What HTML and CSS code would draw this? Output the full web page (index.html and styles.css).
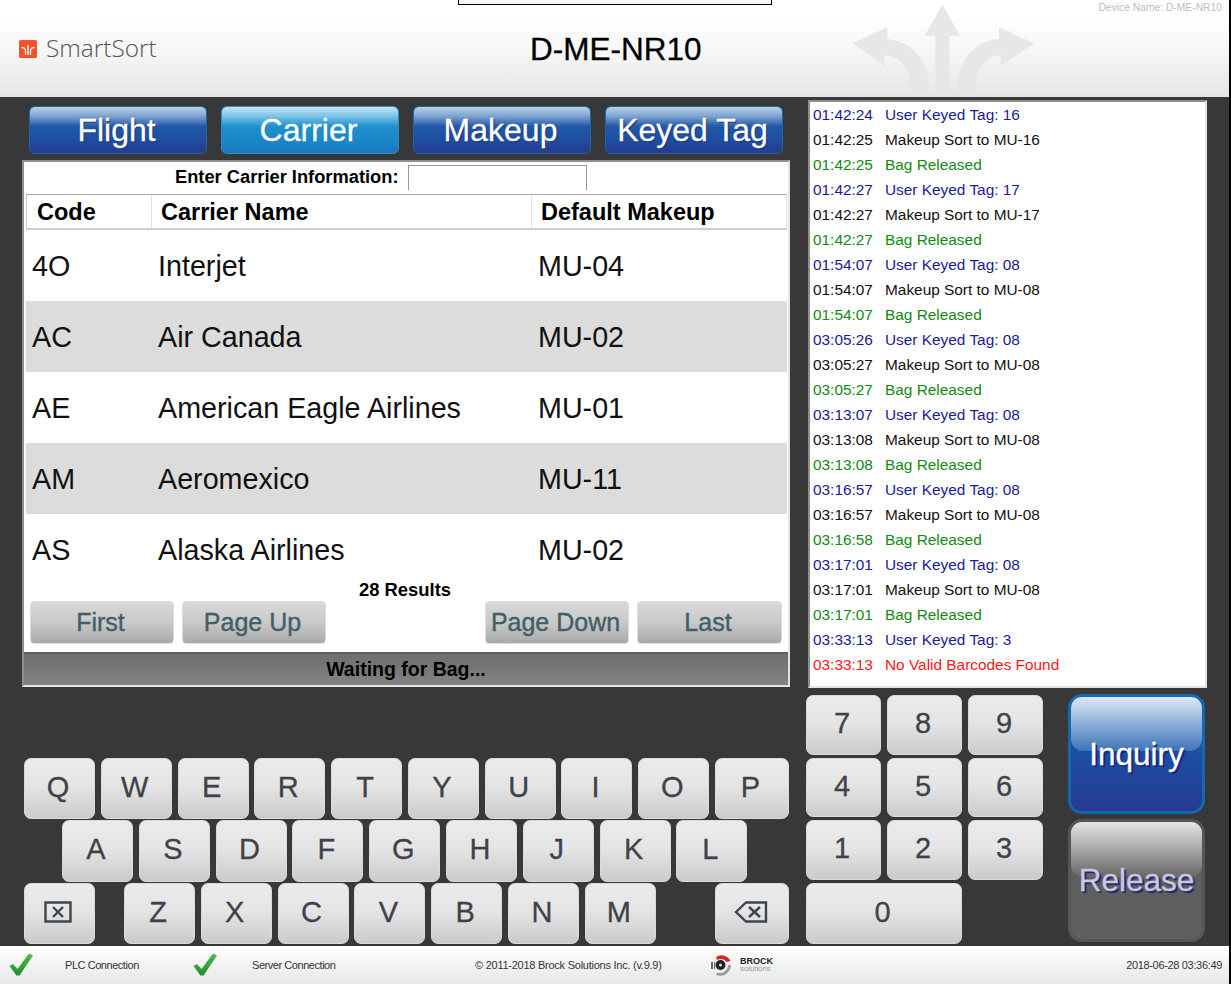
FILE: index.html
```html
<!DOCTYPE html>
<html lang="en">
<head>
    <meta charset="UTF-8">
    <meta name="viewport" content="width=device-width, initial-scale=1.0">
    <title>SmartSort</title>
    <link rel="stylesheet" href="styles.css">
</head>
<body>

<div class="app">
    <header class="top-bar">
        <div class="brand">
            <svg class="brand-icon" width="18" height="18" viewBox="0 0 18 18">
                <rect width="18" height="18" rx="1.5" fill="#f2512a"/>
                <path d="M2.5 7.5C5 7.5 6.5 8.5 6.5 11V15M15.5 7.5C13 7.5 11.5 8.5 11.5 11V15M9 5V15" fill="none" stroke="#fff" stroke-width="1.3"/>
            </svg>
            <span class="brand-name">SmartSort</span>
        </div>
        <div class="device-title">D-ME-NR10</div>
        <div class="device-name">Device Name: D-ME-NR10</div>
        <div class="top-tab"></div>
        <svg class="watermark" width="183" height="90" viewBox="0 0 549 270">
            <path fill="#e6e7e8" d="M274 14L327 107H295V270H253V107H221Z"/>
            <path fill="#e6e7e8" d="M4 130L109 82V117C180 122 234 180 234 270H179C179 205 150 170 102 165V198Z"/>
            <path fill="#e6e7e8" d="M549 130L444 82V117C373 122 319 180 319 270H374C374 205 403 170 449 165V198Z"/>
        </svg>
    </header>

    <main class="main">
        <div class="upper">
            <section class="left-col">
                <nav class="tabs">
                    <button class="tab">Flight</button>
                    <button class="tab tab-active">Carrier</button>
                    <button class="tab">Makeup</button>
                    <button class="tab">Keyed Tag</button>
                </nav>
                <div class="panel">
                    <div class="search-row">
                        <label class="search-label">Enter Carrier Information:</label>
                        <input class="search-input" type="text">
                    </div>
                    <div class="table-head">
                        <div class="head-cell col-code">Code</div>
                        <div class="head-cell col-name">Carrier Name</div>
                        <div class="head-cell col-makeup">Default Makeup</div>
                    </div>
                    <div class="table-row">
                        <div class="col-code">4O</div><div class="col-name">Interjet</div><div class="col-makeup">MU-04</div>
                    </div>
                    <div class="table-row row-alt">
                        <div class="col-code">AC</div><div class="col-name">Air Canada</div><div class="col-makeup">MU-02</div>
                    </div>
                    <div class="table-row">
                        <div class="col-code">AE</div><div class="col-name">American Eagle Airlines</div><div class="col-makeup">MU-01</div>
                    </div>
                    <div class="table-row row-alt">
                        <div class="col-code">AM</div><div class="col-name">Aeromexico</div><div class="col-makeup">MU-11</div>
                    </div>
                    <div class="table-row">
                        <div class="col-code">AS</div><div class="col-name">Alaska Airlines</div><div class="col-makeup">MU-02</div>
                    </div>
                    <div class="results">28 Results</div>
                    <div class="pager">
                        <button class="page-btn">First</button>
                        <button class="page-btn">Page Up</button>
                        <button class="page-btn page-btn-right">Page Down</button>
                        <button class="page-btn page-btn-last">Last</button>
                    </div>
                    <div class="status">Waiting for Bag...</div>
                </div>
            </section>

            <section class="log">
                <div class="log-line log-user"><span class="log-time">01:42:24</span>User Keyed Tag: 16</div>
                <div class="log-line"><span class="log-time">01:42:25</span>Makeup Sort to MU-16</div>
                <div class="log-line log-bag"><span class="log-time">01:42:25</span>Bag Released</div>
                <div class="log-line log-user"><span class="log-time">01:42:27</span>User Keyed Tag: 17</div>
                <div class="log-line"><span class="log-time">01:42:27</span>Makeup Sort to MU-17</div>
                <div class="log-line log-bag"><span class="log-time">01:42:27</span>Bag Released</div>
                <div class="log-line log-user"><span class="log-time">01:54:07</span>User Keyed Tag: 08</div>
                <div class="log-line"><span class="log-time">01:54:07</span>Makeup Sort to MU-08</div>
                <div class="log-line log-bag"><span class="log-time">01:54:07</span>Bag Released</div>
                <div class="log-line log-user"><span class="log-time">03:05:26</span>User Keyed Tag: 08</div>
                <div class="log-line"><span class="log-time">03:05:27</span>Makeup Sort to MU-08</div>
                <div class="log-line log-bag"><span class="log-time">03:05:27</span>Bag Released</div>
                <div class="log-line log-user"><span class="log-time">03:13:07</span>User Keyed Tag: 08</div>
                <div class="log-line"><span class="log-time">03:13:08</span>Makeup Sort to MU-08</div>
                <div class="log-line log-bag"><span class="log-time">03:13:08</span>Bag Released</div>
                <div class="log-line log-user"><span class="log-time">03:16:57</span>User Keyed Tag: 08</div>
                <div class="log-line"><span class="log-time">03:16:57</span>Makeup Sort to MU-08</div>
                <div class="log-line log-bag"><span class="log-time">03:16:58</span>Bag Released</div>
                <div class="log-line log-user"><span class="log-time">03:17:01</span>User Keyed Tag: 08</div>
                <div class="log-line"><span class="log-time">03:17:01</span>Makeup Sort to MU-08</div>
                <div class="log-line log-bag"><span class="log-time">03:17:01</span>Bag Released</div>
                <div class="log-line log-user"><span class="log-time">03:33:13</span>User Keyed Tag: 3</div>
                <div class="log-line log-error"><span class="log-time">03:33:13</span>No Valid Barcodes Found</div>
            </section>
        </div>

        <div class="lower">
            <div class="keyboard">
                <div class="key-row">
                    <button class="key">Q</button><button class="key">W</button><button class="key">E</button><button class="key">R</button><button class="key">T</button><button class="key">Y</button><button class="key">U</button><button class="key">I</button><button class="key">O</button><button class="key key-wide">P</button>
                </div>
                <div class="key-row key-row-a">
                    <button class="key">A</button><button class="key">S</button><button class="key">D</button><button class="key">F</button><button class="key">G</button><button class="key">H</button><button class="key">J</button><button class="key">K</button><button class="key">L</button>
                </div>
                <div class="key-row">
                    <button class="key key-clear">
                        <svg width="28" height="22" viewBox="0 0 28 22"><path d="M1.500 1.500H26.500V20.500H1.500ZM9 6L19 16M19 6L9 16" fill="none" stroke="#3d4650" stroke-width="2.4"/></svg>
                    </button>
                    <button class="key">Z</button><button class="key">X</button><button class="key">C</button><button class="key">V</button><button class="key">B</button><button class="key">N</button><button class="key">M</button>
                    <button class="key key-back">
                        <svg width="34" height="22" viewBox="0 0 34 22"><path d="M2 11L12 1.500H32V20.500H12ZM15 6L26 16M26 6L15 16" fill="none" stroke="#3d4650" stroke-width="2.4"/></svg>
                    </button>
                </div>
            </div>

            <div class="numpad">
                <button class="key">7</button><button class="key">8</button><button class="key">9</button>
                <button class="key">4</button><button class="key">5</button><button class="key">6</button>
                <button class="key">1</button><button class="key">2</button><button class="key">3</button>
                <button class="key key-zero">0</button>
            </div>

            <div class="actions">
                <button class="action action-inquiry">Inquiry</button>
                <button class="action action-release">Release</button>
            </div>
        </div>
    </main>

    <footer class="bottom-bar">
        <svg class="check" width="25" height="24" viewBox="0 0 25 24">
            <defs>
                <linearGradient id="checkFill" x1="0" y1="0" x2="0" y2="1">
                    <stop offset="0" stop-color="#52b852"/>
                    <stop offset="1" stop-color="#1f8f2f"/>
                </linearGradient>
            </defs>
            <path d="M0.500 13L4 11L8.500 16L20 0.500L24 2.500L10.500 22.500H7.500Z" fill="url(#checkFill)"/>
        </svg>
        <span class="conn-label">PLC Connection</span>
        <svg class="check check-server" width="25" height="24" viewBox="0 0 25 24">
            <path d="M0.500 13L4 11L8.500 16L20 0.500L24 2.500L10.500 22.500H7.500Z" fill="url(#checkFill)"/>
        </svg>
        <span class="conn-label conn-server">Server Connection</span>
        <span class="copyright">&copy; 2011-2018 Brock Solutions Inc. (v.9.9)</span>
        <div class="brock">
            <svg width="26" height="24" viewBox="0 0 26 24">
                <circle cx="9.500" cy="12" r="5" fill="#222"/>
                <circle cx="9.500" cy="12" r="1.500" fill="#ddd"/>
                <path d="M5 4A10 10 0 0 1 19.500 8L15.500 9A7 7 0 0 0 6 7Z" fill="#e02020"/>
                <path d="M20 12A11 11 0 0 1 5 22L6 19.500A8 8 0 0 0 17 12Z" fill="#9a9a9a"/>
                <path d="M0 9H2V16H0ZM3 9H4V16H3Z" fill="#666"/>
            </svg>
            <div class="brock-text"><b>BROCK</b><span>solutions</span></div>
        </div>
        <span class="clock">2018-06-28 03:36:49</span>
    </footer>
</div>

</body>
</html>
```

FILE: styles.css
```css
* {
    box-sizing: border-box;
}
html, body {
    margin: 0;
    padding: 0;
    overflow: hidden;
}
body {
    font-family: "Liberation Sans", Arial, sans-serif;
    background-color: #000;
}
button {
    font-family: inherit;
    padding: 0;
    cursor: pointer;
}
.app {
    width: 1229px;
    height: 984px;
    display: flex;
    flex-direction: column;
    background-color: #383838;
}

/* top bar */
.top-bar {
    position: relative;
    height: 97px;
    flex: none;
    display: flex;
    align-items: center;
    background: linear-gradient(#fff 18%, #f4f4f4 60%, #e4e5e6);
}
.brand {
    display: flex;
    align-items: center;
    margin-left: 19px;
    width: 511px;
    margin-top: 1px;
}
.brand-icon {
    flex: none;
}
.brand-name {
    font-family: "Open Sans", sans-serif;
    font-weight: 300;
    font-size: 24.400px;
    line-height: 30px;
    color: #555;
    margin-left: 9px;
    margin-top: -3px;
}
.device-title {
    font-size: 31.500px;
    color: #000;
    margin-top: 2px;
    -webkit-text-stroke: 0.3px #000;
}
.device-name {
    position: absolute;
    top: 2px;
    right: 7px;
    font-size: 10.300px;
    color: #bdbdbd;
}
.top-tab {
    position: absolute;
    top: 0;
    left: 458px;
    width: 314px;
    height: 5px;
    background-color: #f9f9f9;
    border: 1px solid #000;
    border-top: none;
}
.watermark {
    position: absolute;
    left: 851px;
    top: 0;
}

/* main area */
.main {
    height: 849px;
    flex: none;
}
.upper {
    display: flex;
    height: 597px;
    padding-left: 22px;
}
.left-col {
    width: 768px;
}
.tabs {
    display: flex;
    gap: 14px;
    padding: 9px 0 0 7px;
}
.tab {
    width: 178px;
    height: 48px;
    border: 1px solid #1b6aa5;
    border-radius: 6px;
    font-size: 32px;
    padding-right: 3px;
    color: #fff;
    -webkit-text-stroke: 0.3px #fff;
    text-shadow: 1px 1px 1px #1a2a80;
    background: linear-gradient(#bcd3ea, #7da3cf 20%, #2258a7 42%, #1d4fa0 70%, #283a90);
}
.tab-active {
    border-color: #2f8fc4;
    background: linear-gradient(#c2e6f5, #7cc3e6 20%, #1e90cd 42%, #1a86c8 75%, #1a78bd);
    text-shadow: none;
}
.panel {
    margin-top: 6px;
    height: 527px;
    background-color: #fff;
    border: 2px solid #e4e4e4;
    border-top-color: #8e8e8e;
    border-left-color: #8e8e8e;
}
.search-row {
    display: flex;
    justify-content: flex-start;
    height: 32px;
    padding-top: 3px;
}
.search-label {
    margin-left: 151px;
    width: 233px;
    font-size: 18.300px;
    font-weight: bold;
    line-height: 24px;
}
.search-input {
    width: 179px;
    height: 25px;
    border: none;
    border-top: 1px solid #999;
    border-left: 1px solid #999;
    border-right: 1px solid #999;
    background-color: #fff;
    outline: none;
}
.table-head {
    display: flex;
    height: 36px;
    margin: 0 1px 0 2px;
    border-top: 1px solid #a5a5a5;
    border-bottom: 2px solid #cecece;
    border-left: 1px solid #cecece;
    border-right: 1px solid #e0e0e0;
}
.head-cell {
    font-size: 23.500px;
    font-weight: bold;
    line-height: 34px;
    border-right: 1px solid #e3e3e3;
}
.head-cell.col-code {
    width: 125px;
    padding-left: 10px;
}
.head-cell.col-name {
    width: 380px;
    padding-left: 9px;
}
.head-cell.col-makeup {
    flex: 1;
    border-right: none;
    padding-left: 9px;
}
.table-row {
    display: flex;
    align-items: center;
    height: 71px;
    margin: 0 1px 0 2px;
    padding-top: 1px;
    font-size: 28.700px;
    color: #111;
}
.row-alt {
    background-color: #dcdcdc;
}
.table-row .col-code {
    width: 126px;
    padding-left: 6px;
}
.table-row .col-name {
    width: 381px;
    padding-left: 6px;
}
.table-row .col-makeup {
    padding-left: 5px;
}
.results {
    text-align: center;
    font-size: 18.400px;
    font-weight: bold;
    line-height: 20px;
    margin-top: -5px;
    padding-right: 2px;
}
.pager {
    display: flex;
    gap: 8px;
    padding: 0 6px;
    margin-top: 1px;
}
.page-btn {
    width: 144px;
    height: 43px;
    border: 1px solid #ddd;
    border-radius: 4px;
    font-size: 25px;
    color: #3f6166;
    padding: 0 3px 1px 0;
    -webkit-text-stroke: 0.4px #3f6166;
    background: linear-gradient(#d8d8d8, #c9c9c9 50%, #a9a9a9);
}
.page-btn-right {
    margin-left: auto;
}
.page-btn-last {
    width: 145px;
}
.status {
    height: 33px;
    margin-top: 8px;
    border-top: 2px solid #5e5e5e;
    text-align: center;
    font-size: 19.500px;
    font-weight: bold;
    line-height: 31px;
    background: linear-gradient(#6e6e6e, #838383);
}
.log {
    margin: 3px 0 0 18px;
    width: 399px;
    height: 588px;
    padding: 0 0 0 3px;
    background-color: #fff;
    border: 2px solid #e4e4e4;
    border-top-color: #8e8e8e;
    border-left-color: #8e8e8e;
    font-size: 15.400px;
    color: #111;
}
.log-line {
    height: 25px;
    line-height: 25px;
    white-space: nowrap;
}
.log-time {
    display: inline-block;
    width: 72px;
}
.log-user {
    color: #1a1a99;
}
.log-bag {
    color: #128a12;
}
.log-error {
    color: #ff1616;
}

/* keyboard, numpad, action buttons */
.lower {
    display: flex;
    height: 252px;
    padding-left: 24px;
}
.keyboard {
    width: 765px;
    display: flex;
    flex-direction: column;
    justify-content: flex-end;
    gap: 1px;
    padding-bottom: 2px;
}
.key-row {
    display: flex;
    gap: 5.800px;
}
.key-row-a {
    margin-left: 38px;
}
.key {
    width: 71px;
    height: 61.500px;
    border: 1px solid #dadada;
    border-radius: 7px;
    font-size: 29px;
    padding: 0 3px 2px 0;
    color: #40424a;
    -webkit-text-stroke: 0.3px #40424a;
    background: linear-gradient(#ecebec, #e6e5e6 45%, #cbcbcb);
}
.key-wide {
    width: 74px;
}
.key svg {
    display: block;
    margin: auto;
}
.key-clear {
    margin-right: 23.200px;
}
.key-back {
    width: 74px;
    margin-left: auto;
}
.numpad {
    width: 237px;
    margin-left: 17px;
    padding-top: 1px;
    display: grid;
    grid-template-columns: repeat(3, 75px);
    grid-auto-rows: 59.500px;
    gap: 3px 6px;
    align-content: start;
}
.numpad .key {
    width: auto;
    height: auto;
}
.numpad .key-zero {
    grid-column: span 2;
    height: 61px;
}
.actions {
    width: 137px;
    margin-left: 25px;
    display: flex;
    flex-direction: column;
    gap: 5px;
}
.action {
    position: relative;
    z-index: 0;
    width: 137px;
    border-radius: 14px;
    border: 3px solid #1269ae;
    overflow: hidden;
    font-size: 31.500px;
    color: #fff;
    -webkit-text-stroke: 0.3px currentColor;
    text-shadow: 2px 2px 1px #1a237e;
    background: linear-gradient(#1b50a3 45%, #283a92);
}
.action::before {
    content: "";
    position: absolute;
    z-index: -1;
    top: 0;
    left: 0;
    right: 0;
    height: 47%;
    border-radius: 0 0 12px 12px;
    background: linear-gradient(#dbe9f6, #3f74b8);
}
.action-inquiry {
    height: 120px;
}
.action-release {
    height: 123px;
    border-color: #565656;
    color: #c9c9d8;
    background: #5f5f5f;
}
.action-release::before {
    background: linear-gradient(#e6e6e6, #676767);
}

/* bottom bar */
.bottom-bar {
    height: 38px;
    flex: none;
    display: flex;
    align-items: center;
    background: linear-gradient(#fff, #e6e7e8);
    font-size: 11px;
    color: #333;
    letter-spacing: -0.45px;
}
.check {
    flex: none;
    margin-left: 9px;
}
.conn-label {
    margin-left: 31px;
    width: 74px;
    white-space: nowrap;
}
.check-server {
    margin-left: 54px;
}
.conn-server {
    margin-left: 34px;
    width: 84px;
}
.copyright {
    margin-left: 139px;
    width: 187px;
    white-space: nowrap;
    letter-spacing: -0.25px;
}
.brock {
    display: flex;
    align-items: center;
    margin-left: 49px;
    gap: 3px;
}
.brock-text {
    width: 33px;
    white-space: nowrap;
    font-size: 9px;
    line-height: 8px;
    letter-spacing: 0;
    color: #222;
}
.brock-text b,
.brock-text span {
    display: block;
}
.brock-text span {
    font-size: 8px;
    letter-spacing: -0.1px;
    color: #999;
}
.clock {
    margin-left: auto;
    margin-right: 7px;
    letter-spacing: -0.33px;
}
```
